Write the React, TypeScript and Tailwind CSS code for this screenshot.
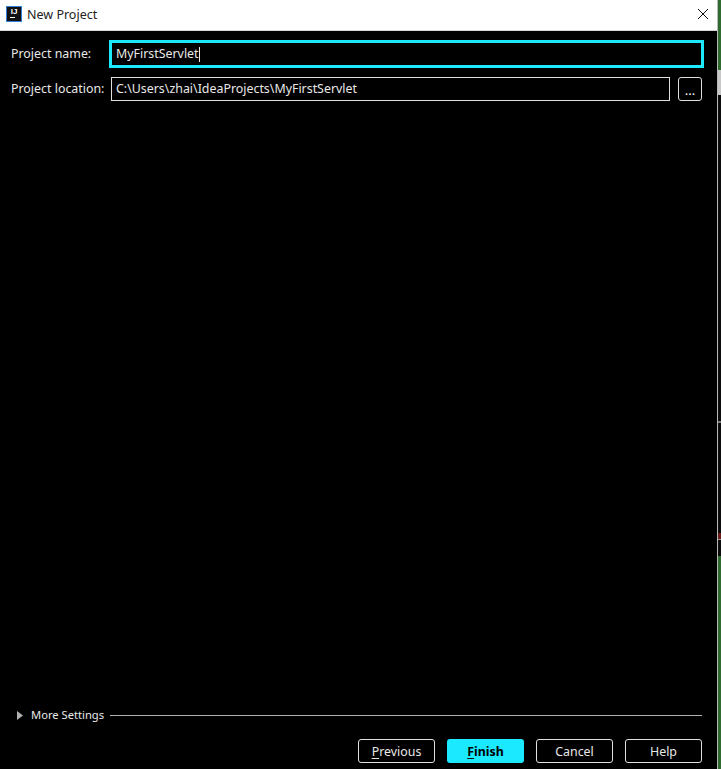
import React from "react";

const font = "font-['Noto_Sans','Open_Sans',sans-serif]";

function FooterButton({ label, hotkey, primary }: { label: string; hotkey?: string; primary?: boolean }) {
  const rest = hotkey ? label.slice(hotkey.length) : label;
  return (
    <button
      className={
        primary
          ? "flex h-6 w-[77px] items-center justify-center rounded-[3px] bg-[#1be9ff] pt-[2px] text-[12.4px] font-bold text-black"
          : "flex h-6 w-[77px] items-center justify-center rounded-[3px] border border-[#e0e0e0] pt-[2px] text-[12.4px] text-[#e8e8e8]"
      }
    >
      {hotkey && <span className="underline underline-offset-2">{hotkey}</span>}
      {rest}
    </button>
  );
}

export default function App() {
  return (
    <div className={`flex h-[769px] w-[721px] overflow-hidden bg-black ${font}`}>
      <div className="flex h-full w-[718px] flex-col border-r border-[#b8b8b8]">
        <div className="flex h-[31px] shrink-0 items-center border-b border-[#d8d8d8] bg-white pl-[6px] pr-[8px]">
          <div className="mb-[2px] flex h-4 w-4 flex-col items-center border border-[#2f7fd6] bg-[#111] font-['Liberation_Sans',sans-serif] text-[8px] font-bold leading-[9px] text-white">
            <span>IJ</span>
            <span className="ml-[-4px] mt-[1px] h-px w-[5px] bg-white" />
          </div>
          <span className="ml-[5px] text-[12.5px] text-[#222]">New Project</span>
          <svg className="mb-[3px] ml-auto" width="12" height="12" viewBox="0 0 12 12" fill="none" stroke="#111" strokeWidth="1">
            <path d="M1 1l10 10M11 1L1 11" />
          </svg>
        </div>
        <div className="flex flex-col gap-[9px] pl-[11px] pt-[9px]">
          <div className="flex items-center pr-[13px]">
            <span className="w-[98px] text-[12.4px] text-[#e8e8e8]">Project name:</span>
            <div className="flex h-[28px] flex-1 items-center border-[3px] border-[#1be9ff] pl-[4px] text-[12.4px] text-[#e8e8e8]">
              MyFirstServlet
              <span className="h-[15px] w-px bg-[#e8e8e8]" />
            </div>
          </div>
          <div className="flex items-center pr-[15px]">
            <span className="w-[100px] text-[12.4px] text-[#e8e8e8]">Project location:</span>
            <div className="flex h-6 flex-1 items-center border border-[#e0e0e0] pl-[4px] text-[12.4px] text-[#e8e8e8]">
              C:\Users\zhai\IdeaProjects\MyFirstServlet
            </div>
            <button className="ml-2 flex h-6 w-6 items-end justify-center rounded-[3px] border border-[#e0e0e0] pb-[3px] text-[13px] leading-[13px] text-white">
              ...
            </button>
          </div>
        </div>
        <div className="mt-auto flex items-center pl-[17px] pr-[15px]">
          <svg width="6" height="9" viewBox="0 0 6 9" fill="#b0b0b0">
            <path d="M0 0l6 4.5L0 9z" />
          </svg>
          <span className="ml-[8px] text-[11.2px] text-[#e8e8e8]">More Settings</span>
          <div className="ml-[6px] h-px flex-1 bg-[#b0b0b0]" />
        </div>
        <div className="mb-[6px] mt-[15px] flex justify-end gap-3 pr-[15px]">
          <FooterButton label="Previous" hotkey="P" />
          <FooterButton label="Finish" hotkey="F" primary />
          <FooterButton label="Cancel" />
          <FooterButton label="Help" />
        </div>
      </div>
      <div className="flex h-full flex-1 flex-col">
        <div className="h-[70px] bg-[#2f6b2f]" />
        <div className="h-[25px] bg-[#c8c8c8]" />
        <div className="h-[326px] bg-[#0c0c0c]" />
        <div className="h-[2px] bg-[#777]" />
        <div className="h-[110px] bg-[#0c0c0c]" />
        <div className="h-[6px] bg-[#6b1a1a]" />
        <div className="h-px bg-[#999]" />
        <div className="flex-1 bg-[#0c0c0c]" />
        <div className="h-[213px] bg-[#2f6b2f]" />
      </div>
    </div>
  );
}
